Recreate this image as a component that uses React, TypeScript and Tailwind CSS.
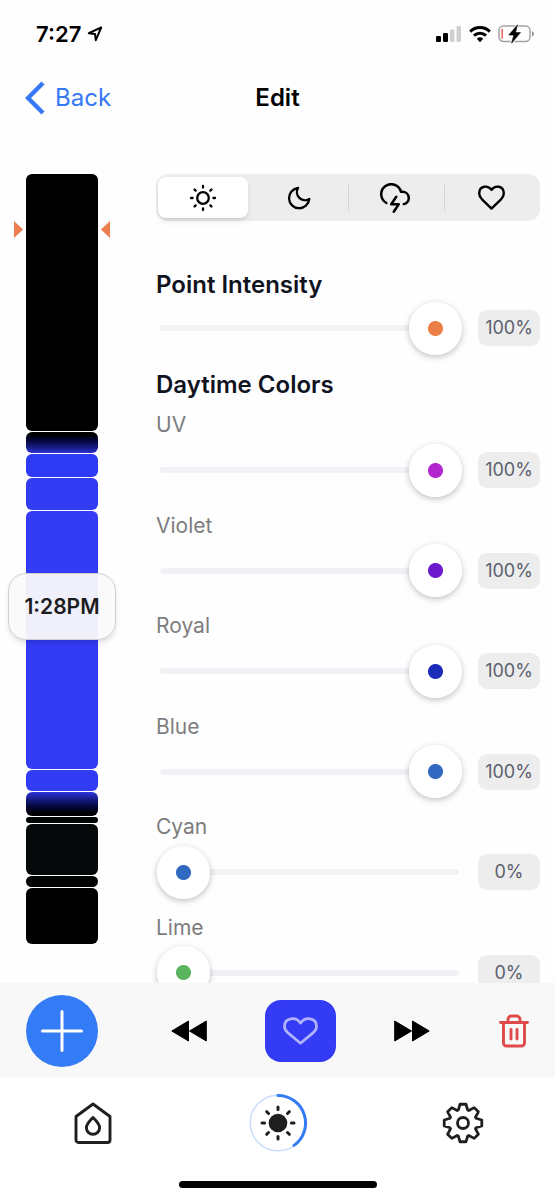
import { useState } from 'react';
import type { CSSProperties, ReactNode } from 'react';

interface Segment {
  height: number;
  className: string;
}

interface Channel {
  name: string;
  color: string;
  value: number;
}

const segments: Segment[] = [
  { height: 257, className: 'bg-black' },
  { height: 21, className: 'bg-linear-to-b from-black to-[#2b31d0]' },
  { height: 23, className: 'bg-[#2f3af5]' },
  { height: 32, className: 'bg-[#323cf3]' },
  { height: 258, className: 'bg-[#333cf4]' },
  { height: 21, className: 'bg-[#333cf5]' },
  { height: 24, className: 'bg-linear-to-b from-[#2c34dc] to-black' },
  { height: 6, className: 'bg-[#040707]' },
  { height: 51, className: 'bg-[#050909]' },
  { height: 11, className: 'bg-[#020404]' },
  { height: 56, className: 'bg-black' },
];

const channels: Channel[] = [
  { name: 'UV', color: '#b126cf', value: 100 },
  { name: 'Violet', color: '#6c19cd', value: 100 },
  { name: 'Royal', color: '#1b2cb9', value: 100 },
  { name: 'Blue', color: '#3069c0', value: 100 },
  { name: 'Cyan', color: '#3069c0', value: 0 },
  { name: 'Lime', color: '#5ab55e', value: 0 },
];

const rayAngles = [0, 45, 90, 135, 180, 225, 270, 315];

// Eight teeth, four corners each, around a 42px box
const gearPoints = rayAngles
  .flatMap((deg) =>
    [
      [-20, 13.8],
      [-9, 19],
      [9, 19],
      [20, 13.8],
    ].map(([offset, r]) => {
      const a = ((deg + offset) * Math.PI) / 180;
      return `${(21 + r * Math.sin(a)).toFixed(2)},${(21 - r * Math.cos(a)).toFixed(2)}`;
    })
  )
  .join(' ');

const StatusBar = () => (
  <div className="flex h-[68px] shrink-0 items-center justify-between pl-9 pr-5">
    <div className="flex items-center gap-1.5">
      <span className="text-[22px] font-semibold leading-7 text-black">7:27</span>
      <svg width="16" height="16" viewBox="0 0 16 16" fill="none" stroke="#000" strokeWidth="2" strokeLinejoin="round">
        <path d="M14.2 1.5 1.8 7.2l6.2.8.8 6.2z" />
      </svg>
    </div>
    <div className="flex items-center gap-[7px]">
      <svg width="26" height="18" viewBox="0 0 26 18">
        <rect x="0" y="11" width="5" height="6" rx="1.2" />
        <rect x="7" y="8" width="5" height="9" rx="1.2" />
        <rect x="14" y="4.5" width="4.5" height="12.5" rx="1.2" fill="#cfcfcf" />
        <rect x="20.5" y="1" width="4.5" height="16" rx="1.2" fill="#cfcfcf" />
      </svg>
      <svg width="22" height="18" viewBox="0 0 22 18" fill="none" stroke="#000" strokeWidth="3">
        <path d="M1.2 6.6a14 14 0 0 1 19.6 0" />
        <path d="M5 10.6a8.6 8.6 0 0 1 12 0" />
        <path d="M11 17.2 7.800 13.8a4.7 4.7 0 0 1 6.4 0z" fill="#000" stroke="none" />
      </svg>
      <svg width="37" height="20" viewBox="0 0 37 20">
        <rect x="1" y="2" width="31" height="15.5" rx="4.5" fill="none" stroke="#a2a2a2" strokeWidth="1.5" />
        <path d="M34 7.2v5.2c2.6-.8 2.6-4.4 0-5.2z" fill="#8e8e8e" />
        <rect x="3.5" y="4.8" width="1.3" height="10" fill="#ec4a3f" />
        <path d="M19.5.8 10.8 11h5l-2.2 8.2L22.5 8.6h-5z" stroke="#fff" strokeWidth="2.4" />
        <path d="M19.5.8 10.8 11h5l-2.2 8.2L22.5 8.6h-5z" stroke="#000" strokeWidth=".6" strokeLinejoin="round" />
      </svg>
    </div>
  </div>
);

const Header = () => (
  <header className="grid h-[60px] shrink-0 grid-cols-3 items-center px-[25px] text-2xl">
    <a href="#back" className="flex items-center gap-2.5 text-[#3478f6]">
      <svg width="20" height="34" viewBox="0 0 20 34" fill="none" stroke="currentColor" strokeWidth="4.4">
        <path d="M18 2 3 17l15 15" />
      </svg>
      Back
    </a>
    <h1 className="text-center font-semibold text-black">Edit</h1>
  </header>
);

const Timeline = () => (
  <div className="relative w-18 shrink-0">
    <div className="flex flex-col gap-px">
      {segments.map((segment, i) => (
        <div key={i} className={`rounded-md ${segment.className}`} style={{ height: segment.height }} />
      ))}
    </div>
    <svg className="absolute -left-3 top-[47px]" width="9" height="17" viewBox="0 0 9 17" fill="#ec7f50">
      <path d="M0 0 9 8.5 0 17z" />
    </svg>
    <svg className="absolute -right-3 top-[47px]" width="9" height="17" viewBox="0 0 9 17" fill="#ec7f50">
      <path d="M9 0 0 8.5 9 17z" />
    </svg>
    <div className="absolute -inset-x-[18px] top-[399px] flex h-[67px] items-center justify-center rounded-[18px] border border-[#cfcfd1] bg-[#fafafa]/95 text-[21px] font-semibold text-[#1c1c1e] shadow-md">
      1:28PM
    </div>
  </div>
);

const SunIcon = () => (
  <svg width="28" height="28" viewBox="0 0 28 28" fill="none" stroke="currentColor" strokeWidth="2.3" strokeLinecap="round">
    <circle cx="14" cy="14" r="5.8" />
    {rayAngles.map((deg) => (
      <path key={deg} d="M14 2v1.600" transform={`rotate(${deg} 14 14)`} />
    ))}
  </svg>
);

const MoonIcon = () => (
  <svg width="28" height="28" viewBox="0 0 24 24" fill="none" stroke="currentColor" strokeWidth="2" strokeLinejoin="round">
    <path d="M20.8 12.8A8.7 8.7 0 1 1 11.2 3.4 6.9 6.9 0 0 0 20.8 12.8z" />
  </svg>
);

const StormIcon = () => (
  <svg width="30" height="30" viewBox="0 0 24 24" fill="none" stroke="currentColor" strokeWidth="2" strokeLinecap="round" strokeLinejoin="round">
    <path d="M19 16.9A5 5 0 0 0 18 7h-1.26a8 8 0 1 0-11.62 9" />
    <path d="m13 11-4 6h6l-4 6" />
  </svg>
);

const HeartIcon = () => (
  <svg width="27" height="25" viewBox="0 0 27 25" fill="none" stroke="currentColor" strokeWidth="2.4" strokeLinejoin="round">
    <path d="M13.5 4.8C10 0 1.2.2 1.2 8.6c0 2.4 1.2 4 2.8 5.7l9.5 9.3 9.5-9.3c1.6-1.7 2.8-3.3 2.8-5.7C25.8.2 17 0 13.5 4.8z" />
  </svg>
);

const modes: { label: string; icon: ReactNode }[] = [
  { label: 'Day', icon: <SunIcon /> },
  { label: 'Night', icon: <MoonIcon /> },
  { label: 'Storm', icon: <StormIcon /> },
  { label: 'Favorites', icon: <HeartIcon /> },
];

const ModeTabs = () => {
  const [active, setActive] = useState(0);

  return (
    <div className="flex h-[47px] items-center rounded-xl bg-[#ededee] py-[3px]">
      {modes.map((mode, i) => (
        <div key={mode.label} className="flex h-full flex-1 items-center gap-px">
          <div className={`h-[26px] w-px ${i > 0 && i !== active && i - 1 !== active ? 'bg-[#d3d3d6]' : ''}`} />
          <button
            type="button"
            aria-label={mode.label}
            onClick={() => setActive(i)}
            className={`mr-1 flex h-full flex-1 items-center justify-center rounded-lg text-black ${
              i === active ? 'bg-white shadow-md' : ''
            }`}
          >
            {mode.icon}
          </button>
        </div>
      ))}
    </div>
  );
};

interface SliderProps {
  label: string;
  color: string;
  initial: number;
}

const Slider = ({ label, color, initial }: SliderProps) => {
  const [value, setValue] = useState(initial);

  return (
    <div className="flex items-center gap-4">
      <div className="grid flex-1 items-center pl-px">
        <div className="col-start-1 row-start-1 mx-[3px] h-1.5 rounded-full bg-[#f1f1f6]" />
        <input
          type="range"
          aria-label={label}
          min={0}
          max={100}
          value={value}
          onChange={(e) => setValue(Number(e.target.value))}
          style={{ '--dot': color } as CSSProperties}
          className="z-10 col-start-1 row-start-1 h-[54px] w-full appearance-none bg-transparent [&::-webkit-slider-thumb]:size-[53px] [&::-webkit-slider-thumb]:appearance-none [&::-webkit-slider-thumb]:rounded-full [&::-webkit-slider-thumb]:bg-[radial-gradient(circle,var(--dot)_7px,white_8px)] [&::-webkit-slider-thumb]:shadow-[0_2px_6px_rgba(0,0,0,0.25)]"
        />
      </div>
      <output className="flex h-9 w-[62px] items-center justify-center rounded-[9px] bg-[#ededee] text-lg text-[#5b606d]">
        {value}%
      </output>
    </div>
  );
};

const Toolbar = () => (
  <div className="z-10 flex h-[95px] shrink-0 items-center bg-[#f8f8f8] px-[26px]">
    <button type="button" aria-label="Add point" className="flex size-18 items-center justify-center rounded-full bg-[#347bf6]">
      <svg width="42" height="42" viewBox="0 0 42 42" stroke="#fff" strokeWidth="3" strokeLinecap="round">
        <path d="M21 1.5v39M1.5 21h39" />
      </svg>
    </button>
    <div className="flex flex-1 items-center justify-between pl-[73px] pr-[69px]">
      <button type="button" aria-label="Previous point">
        <svg width="36" height="22" viewBox="0 0 36 22" stroke="#000" strokeLinejoin="round">
          <path d="M17.5 1v20L.8 11zM35.3 1v20L18.5 11z" />
        </svg>
      </button>
      <button type="button" aria-label="Favorite" className="flex h-[62px] w-[71px] items-center justify-center rounded-2xl bg-[#333cf4]">
        <svg width="35" height="28" viewBox="0 0 35 28" fill="none" stroke="#b0b3fb" strokeWidth="2.7" strokeLinejoin="round">
          <path d="M17.5 6.2C13-.8 1.5.6 1.5 9.4c0 2.6 1.3 4.5 3.2 6.2l12.8 10.6 12.8-10.6c1.9-1.7 3.2-3.6 3.2-6.2C33.5.6 22-.8 17.5 6.2z" />
        </svg>
      </button>
      <button type="button" aria-label="Next point">
        <svg width="36" height="22" viewBox="0 0 36 22" stroke="#000" strokeLinejoin="round">
          <path d="M.7 1v20l16.8-10zM18.5 1v20l16.7-10z" />
        </svg>
      </button>
    </div>
    <button type="button" aria-label="Delete point">
      <svg width="30" height="34" viewBox="0 0 30 34" fill="none" stroke="#df4b4b" strokeWidth="2.9" strokeLinecap="round">
        <path d="M1.500 8.500h27M4.500 9v20a3 3 0 0 0 3 3h15a3 3 0 0 0 3-3V9" />
        <path d="M9 8V5.500a3.500 3.500 0 0 1 3.500-3.500h5A3.500 3.500 0 0 1 21 5.500V8M12 15.500v9.500M18 15.500v9.500" />
      </svg>
    </button>
  </div>
);

const TabBar = () => (
  <div className="h-[122px] shrink-0 bg-white">
    <nav className="grid h-[90px] grid-cols-3 text-[#1f1f1f]">
      <a href="#home" aria-label="Home" className="flex items-center justify-center">
        <svg width="38" height="42" viewBox="0 0 38 42" fill="none" stroke="currentColor" strokeWidth="2.9" strokeLinejoin="round">
          <path d="M19 2 2 14.5v23.5a2.5 2.5 0 0 0 2.5 2.5h29a2.5 2.5 0 0 0 2.5-2.500V14.5z" />
          <path d="M19 15.500c-2.600 3-6.600 6.200-6.600 10.200a6.600 6.600 0 0 0 13.200 0c0-4-4-7.200-6.600-10.200z" />
        </svg>
      </a>
      <a href="#lights" aria-label="Lights" className="flex items-center justify-center">
        <svg width="58" height="58" viewBox="0 0 58 58" fill="none" strokeLinecap="round">
          <circle cx="29" cy="29" r="27.8" stroke="#c6ddfc" strokeWidth="1.5" />
          <path d="M29 1.5a27.5 27.5 0 0 1 16 49.900" stroke="#347bf6" strokeWidth="3" />
          <circle cx="29" cy="29" r="9.300" fill="currentColor" />
          {rayAngles.map((deg) => (
            <path key={deg} d="M29 13v2.600" stroke="currentColor" strokeWidth="3" transform={`rotate(${deg} 29 29)`} />
          ))}
        </svg>
      </a>
      <a href="#settings" aria-label="Settings" className="flex items-center justify-center">
        <svg width="42" height="42" viewBox="0 0 42 42" fill="none" stroke="currentColor" strokeWidth="2.8" strokeLinejoin="round">
          <polygon points={gearPoints} />
          <circle cx="21" cy="21" r="5.5" />
        </svg>
      </a>
    </nav>
    <div className="mx-auto mt-[13px] h-[7px] w-[198px] rounded-full bg-black" />
  </div>
);

const App = () => (
  <div className="flex h-screen flex-col bg-[#fefefe] font-['Inter',sans-serif]">
    <StatusBar />
    <Header />
    <main className="flex min-h-0 flex-1 gap-[58px] overflow-y-auto pl-[26px] pr-[15px] pt-[46px] [scrollbar-width:none]">
      <Timeline />
      <div className="min-w-0 flex-1">
        <ModeTabs />
        <h2 className="mt-12 text-2xl font-semibold text-[#10141f]">Point Intensity</h2>
        <Slider label="Point Intensity" color="#ec7f46" initial={100} />
        <h2 className="mt-3.5 text-2xl font-semibold text-[#10141f]">Daytime Colors</h2>
        <div className="mt-2.5 grid h-[603px] grid-rows-6">
          {channels.map((channel) => (
            <div key={channel.name}>
              <h3 className="mb-1 text-[21px] leading-7 text-[#7d7d7d]">{channel.name}</h3>
              <Slider label={channel.name} color={channel.color} initial={channel.value} />
            </div>
          ))}
        </div>
      </div>
    </main>
    <Toolbar />
    <TabBar />
  </div>
);

export default App;
